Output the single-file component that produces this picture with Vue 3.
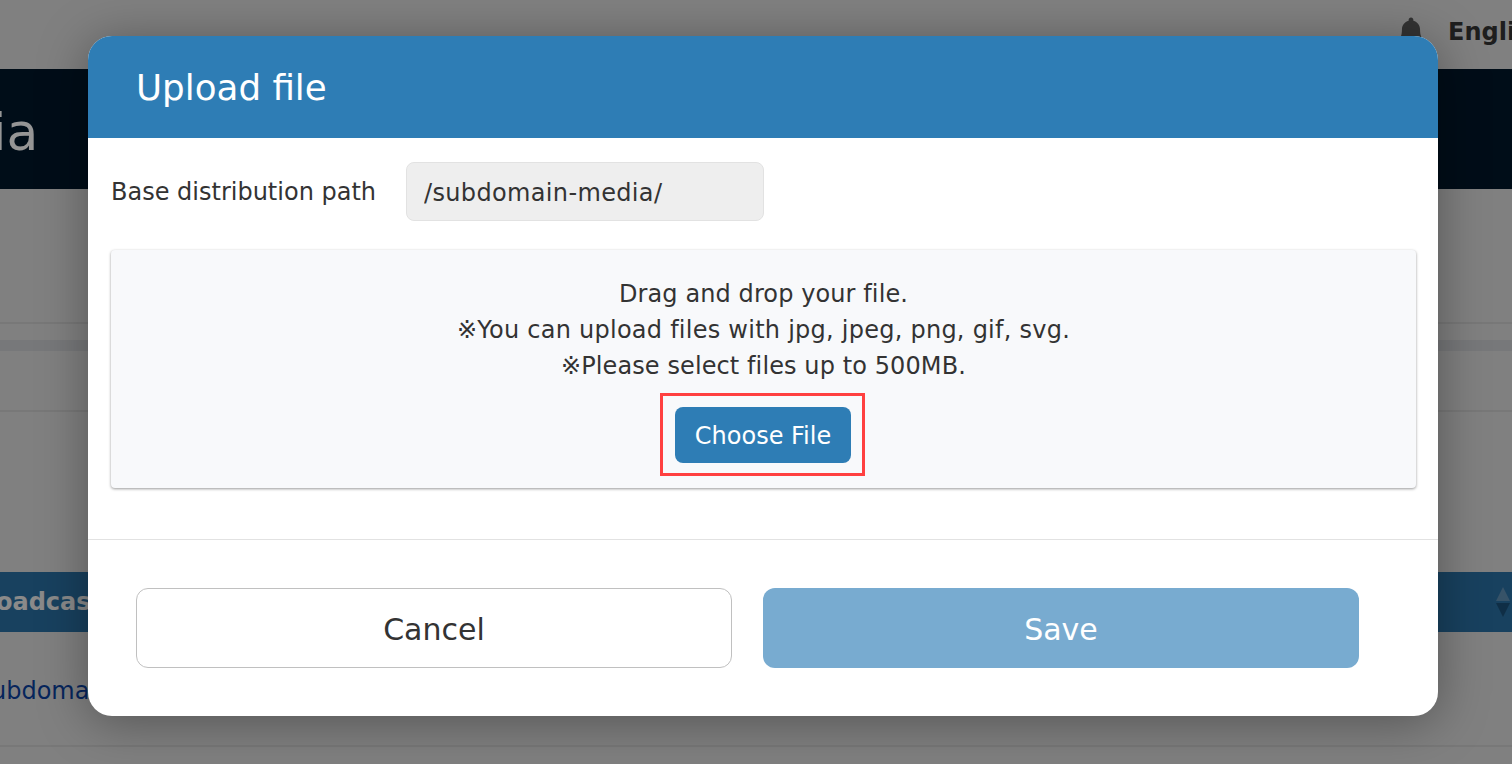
<template>
  <div class="page">
    <header class="topbar">
      <svg class="bell" viewBox="0 0 24 26" aria-hidden="true">
        <path d="M12 0.5c-1.3 0-2.2 1-2.2 2.2v.7C6 4.4 3.6 7.6 3.6 11.5c0 5.6-1.3 7.6-3 9.4-.5.5-.6.9-.6 1.3 0 1 .8 1.8 1.9 1.8h20.2c1.1 0 1.9-.8 1.9-1.8 0-.4-.1-.8-.6-1.3-1.7-1.8-3-3.8-3-9.4 0-3.9-2.4-7.1-6.2-8.1v-.7c0-1.2-.9-2.2-2.2-2.2z" />
      </svg>
      <span class="lang">English</span>
    </header>

    <div class="banner"><h1>ia</h1></div>

    <div class="tabs"></div>
    <div class="band"></div>
    <div class="filter"></div>

    <div class="table-head">
      <span>oadcast</span>
      <svg class="sort" viewBox="0 0 16 32" aria-hidden="true">
        <path class="up" d="M8 1l7 14H1z" />
        <path class="down" d="M8 31L1 17h14z" />
      </svg>
    </div>
    <div class="table-row"><a href="#" @click.prevent>ubdomain</a></div>

    <div class="backdrop">
      <section class="modal">
        <h2 class="modal-title">Upload file</h2>

        <div class="modal-body">
          <div class="path-row">
            <label for="basePath">Base distribution path</label>
            <input id="basePath" type="text" :value="basePath" disabled />
          </div>

          <div class="dropzone">
            <p v-for="line in hints" :key="line">{{ line }}</p>
            <div class="highlight">
              <button type="button" class="choose">Choose File</button>
            </div>
          </div>
        </div>

        <footer class="modal-footer">
          <button type="button" class="btn cancel">Cancel</button>
          <button type="button" class="btn save">Save</button>
        </footer>
      </section>
    </div>
  </div>
</template>

<script setup>
const basePath = '/subdomain-media/'

const hints = [
  'Drag and drop your file.',
  '※You can upload files with jpg, jpeg, png, gif, svg.',
  '※Please select files up to 500MB.'
]
</script>

<style scoped>
.page {
  position: relative;
  height: 764px;
  overflow: hidden;
  background-color: #d6d6d6;
  font-family: "DejaVu Sans", Verdana, sans-serif;
  color: #333;
}

.topbar {
  height: 69px;
  display: flex;
  align-items: center;
  padding-left: 1398px;
  box-sizing: border-box;
  white-space: nowrap;
}

.bell {
  flex: none;
  width: 26px;
  height: 28px;
  fill: #555;
  margin-top: -7px;
}

.lang {
  flex: none;
  margin-left: 24px;
  font-size: 24px;
  font-weight: bold;
  margin-top: -5px;
}

.banner {
  height: 120px;
  background-color: #001629;
  display: flex;
  align-items: center;
}

.banner h1 {
  margin: 5px 0 0 -8px;
  font-size: 52px;
  font-weight: normal;
  color: #f8f8f8;
}

.tabs {
  height: 135px;
  border-bottom: 2px solid #c8c8c8;
  box-sizing: border-box;
}

.band {
  height: 27px;
  border-top: 16px solid transparent;
  box-sizing: border-box;
  background-color: #c6c9cc;
  background-clip: padding-box;
}

.filter {
  height: 221px;
  box-sizing: border-box;
  background: linear-gradient(#c8c8c8, #c8c8c8) 0 59px / 100% 2px no-repeat;
}

.table-head {
  height: 60px;
  background-color: #286d9e;
  color: #e6e6e6;
  font-size: 24px;
  font-weight: bold;
  display: flex;
  align-items: center;
  justify-content: space-between;
}

.table-head span {
  margin-left: -4px;
}

.sort {
  width: 16px;
  height: 32px;
  margin-right: 1px;
}

.sort .up {
  fill: #5c8bae;
}

.sort .down {
  fill: #1a4e75;
}

.table-row {
  height: 115px;
  box-sizing: border-box;
  border-bottom: 2px solid #c8c8c8;
  padding-top: 45px;
  font-size: 24px;
  white-space: nowrap;
}

.table-row a {
  margin-left: -9px;
  color: #0b3f9a;
  text-decoration: none;
}

.backdrop {
  position: absolute;
  inset: 0;
  background-color: rgba(0, 0, 0, 0.4);
  padding: 36px 0 0 88px;
  box-sizing: border-box;
}

.modal {
  width: 1350px;
  height: 680px;
  background-color: #fff;
  border-radius: 24px;
  overflow: hidden;
  box-shadow: 0 6px 50px rgba(0, 0, 0, 0.35);
  display: flex;
  flex-direction: column;
}

.modal-title {
  margin: 0;
  height: 102px;
  flex: none;
  padding: 1px 0 0 48px;
  display: flex;
  align-items: center;
  box-sizing: border-box;
  background-color: #2e7db5;
  color: #fff;
  font-size: 35.7px;
  font-weight: normal;
}

.modal-body {
  height: 402px;
  flex: none;
  box-sizing: border-box;
  padding: 24px 22px 0 23px;
  border-bottom: 1px solid #e2e2e2;
}

.path-row {
  display: flex;
  align-items: center;
  height: 59px;
}

.path-row label {
  width: 295px;
  box-sizing: border-box;
  font-size: 24px;
  margin-top: 1px;
}

.path-row input {
  width: 358px;
  height: 59px;
  box-sizing: border-box;
  padding: 2px 17px 0;
  background-color: #eee;
  border: 1px solid #e2e2e2;
  border-radius: 8px;
  font-family: inherit;
  font-size: 24px;
  letter-spacing: 0.35px;
  color: #333;
  opacity: 1;
}

.dropzone {
  margin-top: 29px;
  height: 238px;
  box-sizing: border-box;
  padding-top: 26px;
  background-color: #f8f9fb;
  border-radius: 4px;
  box-shadow: 0 1px 3px rgba(0, 0, 0, 0.4);
  display: flex;
  flex-direction: column;
  align-items: center;
  font-size: 24px;
  letter-spacing: 0.1px;
  line-height: 36px;
}

.dropzone p {
  margin: 0;
}

.dropzone p:nth-child(2) {
  letter-spacing: 0.25px;
}

.highlight {
  margin: 9px 2px 0 0;
  padding: 11px 11px 10px 12px;
  border: 3px solid #ff4040;
}

.choose {
  display: block;
  width: 176px;
  height: 56px;
  padding-top: 3px;
  border: none;
  border-radius: 8px;
  background-color: #2e7db5;
  color: #fff;
  font-family: inherit;
  font-size: 24px;
}

.modal-footer {
  display: flex;
  gap: 31px;
  padding: 48px 0 0 48px;
}

.btn {
  width: 596px;
  height: 80px;
  padding-top: 3px;
  box-sizing: border-box;
  border-radius: 12px;
  font-family: inherit;
  font-size: 30px;
}

.cancel {
  background-color: #fff;
  border: 1px solid #c0c0c0;
  color: #333;
}

.save {
  background-color: #78abd0;
  border: none;
  color: #fff;
}
</style>

<style>
html,
body {
  overflow: hidden;
}
</style>
